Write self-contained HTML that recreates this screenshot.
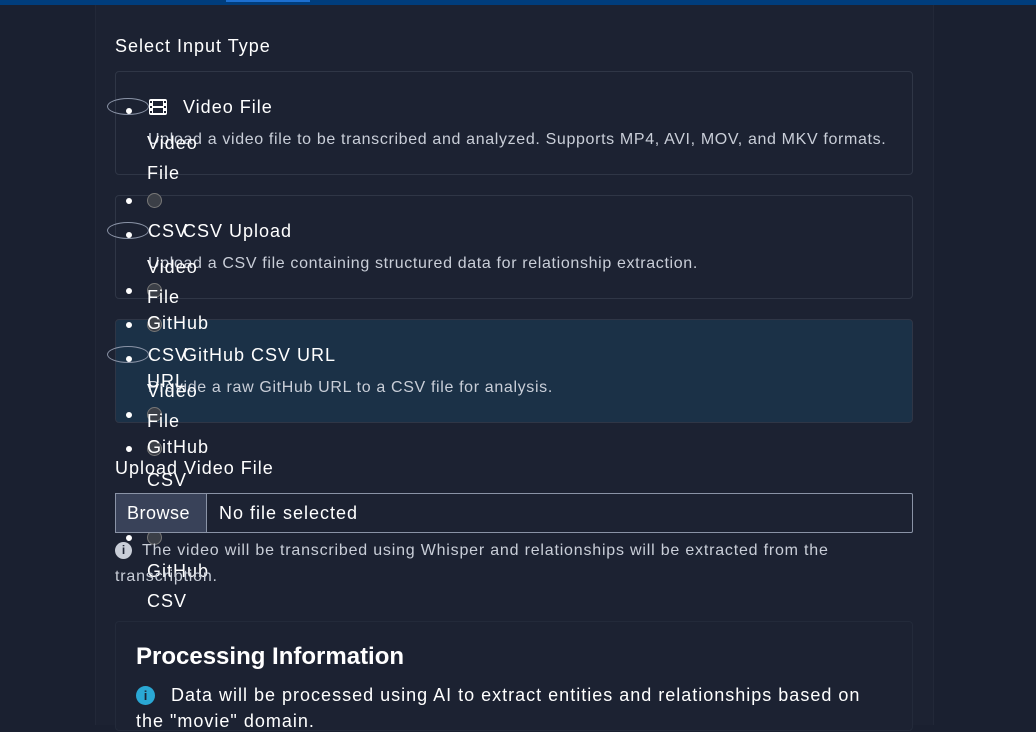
<!DOCTYPE html><html><head><meta charset="utf-8"><style>
*{margin:0;padding:0;box-sizing:border-box}
body{width:1036px;height:725px;overflow:hidden;background:#1a2030;font-family:"Liberation Sans",sans-serif;color:#fff;position:relative}
.a{position:absolute;white-space:nowrap}
.card{position:absolute;left:115px;width:798px;height:104px;border:1px solid #2f3646;border-radius:4px}
.t{font-size:18px;letter-spacing:1px}
.d{font-size:16px;color:#c9ced8;letter-spacing:0.65px}
.b{position:absolute;left:126px;width:6px;height:6px;border-radius:50%;background:#fff}
.c{position:absolute;left:147px;width:15px;height:15px;border-radius:50%;background:#3b3f47;border:1px solid #777}
.e{position:absolute;left:107px;width:42px;height:17px;border-radius:50%;border:1px solid #8a93a6}
.l{position:absolute;left:147px;font-size:18px;letter-spacing:1px}
</style></head><body>
<div class="a" style="left:0;top:0;width:1036px;height:5px;background:#003d7c"></div>
<div class="a" style="left:226px;top:0;width:84px;height:2px;background:#1c6fd0"></div>
<div class="a" style="left:95px;top:5px;width:839px;height:720px;background:#1c2232;border-left:1px solid #222838;border-right:1px solid #222838"></div>
<div class="a t" style="left:115px;top:36px">Select Input Type</div>
<div class="card" style="top:71px"></div>
<div class="card" style="top:195px"></div>
<div class="card" style="top:319px;background:#1b3147"></div>
<svg class="a" style="left:148px;top:98px" width="20" height="18" viewBox="0 0 20 18"><rect x="1" y="1" width="18" height="16" rx="2" fill="#fff"/><rect x="5" y="3" width="10" height="5" fill="#1c2232"/><rect x="5" y="10" width="10" height="5" fill="#1c2232"/><rect x="2" y="3" width="2" height="2" fill="#1c2232"/><rect x="2" y="8" width="2" height="2" fill="#1c2232"/><rect x="2" y="13" width="2" height="2" fill="#1c2232"/><rect x="16" y="3" width="2" height="2" fill="#1c2232"/><rect x="16" y="8" width="2" height="2" fill="#1c2232"/><rect x="16" y="13" width="2" height="2" fill="#1c2232"/></svg>
<div class="a t" style="left:183px;top:97px">Video File</div>
<div class="a d" style="left:148px;top:131px">Upload a video file to be transcribed and analyzed. Supports MP4, AVI, MOV, and MKV formats.</div>
<div class="a t" style="left:148px;top:221px">CSV</div>
<div class="a t" style="left:183px;top:221px">CSV Upload</div>
<div class="a d" style="left:148px;top:255px">Upload a CSV file containing structured data for relationship extraction.</div>
<div class="a t" style="left:148px;top:345px">CSV</div>
<div class="a t" style="left:183px;top:345px">GitHub CSV URL</div>
<div class="a d" style="left:148px;top:379px">Provide a raw GitHub URL to a CSV file for analysis.</div>
<div class="e" style="top:98px"></div><div class="e" style="top:222px"></div><div class="e" style="top:346px"></div>
<div class="b" style="top:108px"></div><div class="b" style="top:198px"></div><div class="b" style="top:232px"></div><div class="b" style="top:288px"></div><div class="b" style="top:322px"></div><div class="b" style="top:356px"></div><div class="b" style="top:412px"></div><div class="b" style="top:446px"></div><div class="b" style="top:535px"></div>
<div class="c" style="top:193px"></div><div class="c" style="top:283px"></div><div class="c" style="top:317px"></div><div class="c" style="top:407px"></div><div class="c" style="top:441px"></div><div class="c" style="top:530px"></div>
<div class="l" style="top:133px">Video</div><div class="l" style="top:163px">File</div>
<div class="l" style="top:257px">Video</div><div class="l" style="top:287px">File</div>
<div class="l" style="top:313px">GitHub</div>
<div class="l" style="top:371px">URL</div><div class="l" style="top:381px">Video</div><div class="l" style="top:411px">File</div>
<div class="l" style="top:437px">GitHub</div><div class="l" style="top:470px">CSV</div>
<div class="l" style="top:561px">GitHub</div><div class="l" style="top:591px">CSV</div>
<div class="a t" style="left:115px;top:458px">Upload Video File</div>
<div class="a" style="left:115px;top:493px;width:798px;height:40px;border:1px solid #8a93a6;border-radius:2px"></div>
<div class="a" style="left:115px;top:493px;width:92px;height:40px;background:#394259;border:1px solid #8a93a6;font-size:18px;letter-spacing:0.5px;padding:9px 0 0 11px">Browse</div>
<div class="a t" style="left:219px;top:503px">No file selected</div>
<div class="a" style="left:115px;top:542px;width:17px;height:17px;border-radius:50%;background:#c9ced8;color:#1c2232;font-size:12px;font-weight:bold;text-align:center;line-height:17px">i</div>
<div class="a d" style="left:142px;top:542px;letter-spacing:0.8px">The video will be transcribed using Whisper and relationships will be extracted from the</div>
<div class="a d" style="left:115px;top:568px;letter-spacing:0.8px">transcription.</div>
<div class="a" style="left:115px;top:621px;width:798px;height:110px;border:1px solid #232a3a;border-radius:4px;background:#1c2232"></div>
<div class="a" style="left:136px;top:643px;font-size:24px;font-weight:bold">Processing Information</div>
<div class="a" style="left:136px;top:686px;width:19px;height:19px;border-radius:50%;background:#2aa8d4;color:#1c2232;font-size:13px;font-weight:bold;text-align:center;line-height:19px">i</div>
<div class="a t" style="left:171px;top:685px">Data will be processed using AI to extract entities and relationships based on</div>
<div class="a t" style="left:136px;top:711px">the "movie" domain.</div>
</body></html>
